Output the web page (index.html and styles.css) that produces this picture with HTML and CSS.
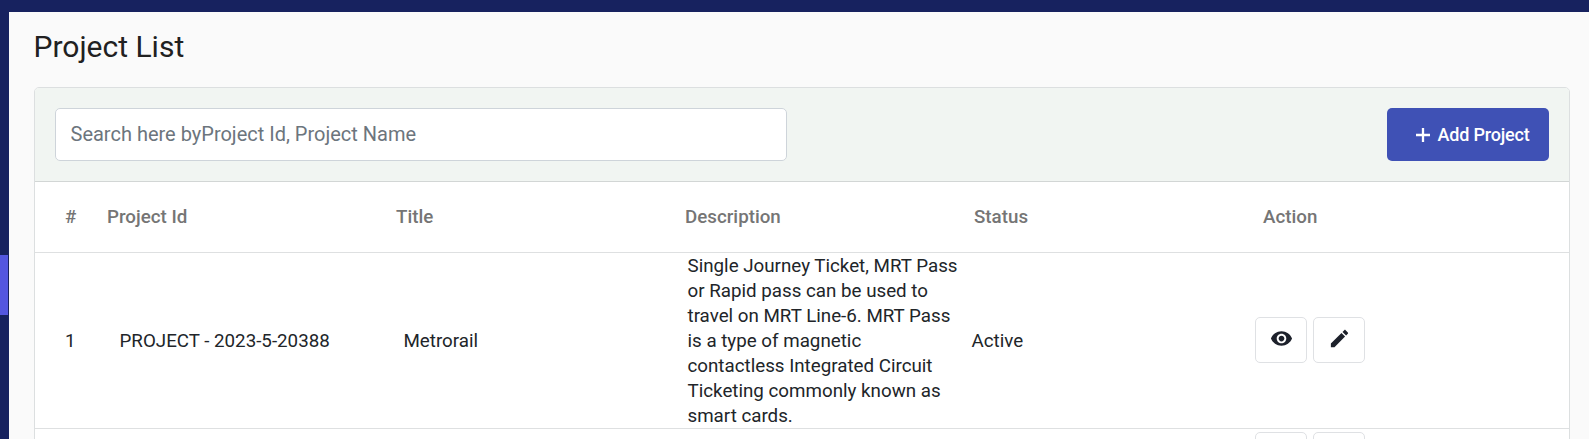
FILE: index.html
```html
<!DOCTYPE html>
<html lang="en">
<head>
<meta charset="utf-8">
<title>Project List</title>
<link rel="stylesheet" href="styles.css">
</head>
<body>
<div class="shell">
  <header class="topbar"></header>
  <div class="body">
    <aside class="sidebar"><div class="sidebar-active"></div></aside>
    <main class="content">
      <h1 class="page-title">Project List</h1>
      <section class="card">
        <div class="toolbar">
          <input class="search" type="text" placeholder="Search here byProject Id, Project Name">
          <button class="add-btn">
            <svg class="plus" viewBox="0 0 14 14"><path d="M7 0v14M0 7h14" stroke="currentColor" stroke-width="2.3"/></svg>
            <span>Add Project</span>
          </button>
        </div>
        <div class="row head">
          <div>#</div><div>Project Id</div><div>Title</div><div>Description</div><div>Status</div><div>Action</div>
        </div>
        <div class="row item">
          <div class="num">1</div>
          <div class="pid">PROJECT - 2023-5-20388</div>
          <div class="name">Metrorail</div>
          <div class="desc">Single Journey Ticket, MRT Pass or Rapid pass can be used to travel on MRT Line-6. MRT Pass is a type of magnetic contactless Integrated Circuit Ticketing commonly known as smart cards.</div>
          <div class="status">Active</div>
          <div class="actions">
            <button class="icon-btn" aria-label="View"><svg viewBox="0 0 24 24"><path d="M12 4.5C7 4.5 2.73 7.61 1 12c1.73 4.39 6 7.5 11 7.5s9.27-3.11 11-7.5c-1.73-4.39-6-7.5-11-7.5zM12 17c-2.76 0-5-2.24-5-5s2.24-5 5-5 5 2.24 5 5-2.24 5-5 5zm0-8c-1.66 0-3 1.34-3 3s1.34 3 3 3 3-1.34 3-3-1.34-3-3-3z"/></svg></button>
            <button class="icon-btn" aria-label="Edit"><svg viewBox="0 0 24 24"><path d="M3 17.25V21h3.75L17.81 9.94l-3.75-3.75L3 17.25zM20.71 7.04c.39-.39.39-1.02 0-1.41l-2.34-2.34c-.39-.39-1.02-.39-1.41 0l-1.83 1.83 3.75 3.75 1.83-1.83z"/></svg></button>
          </div>
        </div>
        <div class="row next">
          <div class="actions">
            <button class="icon-btn" aria-label="View"></button>
            <button class="icon-btn" aria-label="Edit"></button>
          </div>
        </div>
      </section>
    </main>
  </div>
</div>
</body>
</html>
```
FILE: styles.css
```css
* { box-sizing: border-box; }
body { margin: 0; font-family: Roboto, "Liberation Sans", sans-serif; color: #212529; background: #fafafa; }
button { font: inherit; color: inherit; }
.shell { height: 439px; display: flex; flex-direction: column; overflow: hidden; }
.topbar { height: 12px; flex: none; background: #17225f; }
.body { flex: 1; display: flex; min-height: 0; }
.sidebar { width: 9px; flex: none; background: #17225f; padding-top: 243px; }
.sidebar-active { width: 8px; height: 60px; background: #5457e0; }
.content { flex: 1; min-width: 0; padding: 15px 19px 0 25px; }
.page-title { margin: 0 0 20px -0.5px; height: 40px; line-height: 40px; font-size: 30px; font-weight: 400; color: #212121; }
.card { background: #fff; border: 1px solid #dcdfe0; border-radius: 5px; height: 500px; overflow: hidden; }
.toolbar { height: 94px; padding: 20px; display: flex; justify-content: space-between; background: #f1f5f2; border-bottom: 1px solid #d2d6d5; }
.search { width: 732px; height: 53px; padding: 0 15px 2px 14.5px; border: 1px solid #ced4da; border-radius: 5px; background: #fff; font: 400 20px/30px Roboto, "Liberation Sans", sans-serif; color: #212529; }
.search::placeholder { color: #6c757d; opacity: 1; }
.add-btn { width: 162px; height: 53px; padding: 0 19.5px 0 29px; border: 0; border-radius: 5px; display: flex; align-items: center; justify-content: space-between; background: #3f51b5; color: #fff; font-size: 18px; font-weight: 500; letter-spacing: -0.2px; white-space: nowrap; }
.plus { width: 14px; height: 14px; }
.row { display: grid; align-items: center; padding-left: 30px; border-bottom: 1px solid #dee0e1; }
.head { height: 71px; grid-template-columns: 42px repeat(5, 289px); font-size: 18.75px; font-weight: 500; color: #757575; }
.item { height: 176px; padding-top: 1px; grid-template-columns: 54.5px 284px 284px 284px 283.5px 1fr; font-size: 18.75px; line-height: 25px; }
.desc { width: 275px; }
.actions { display: flex; gap: 6px; }
.item .actions { padding-bottom: 3px; }
.icon-btn { width: 52px; height: 46px; padding: 0 0 3px; display: flex; align-items: center; justify-content: center; border: 1px solid #dfe1e4; border-radius: 5px; background: #fff; }
.icon-btn svg { width: 23px; height: 23px; fill: #1d212b; }
.next { padding: 3px 0 0 1220px; }
```
